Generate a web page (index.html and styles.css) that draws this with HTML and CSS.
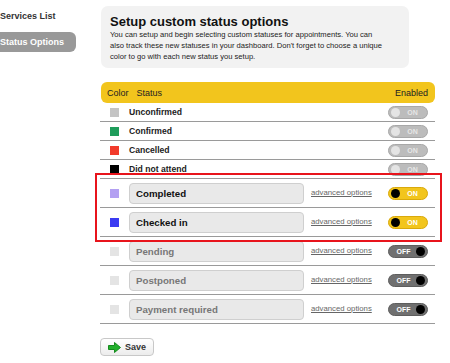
FILE: index.html
```html
<!DOCTYPE html>
<html lang="en">
<head>
    <title>Status Options</title>
    <link rel="stylesheet" href="styles.css">
</head>
<body>
    <div class="sidebar">
        <a class="nav-link" href="#">Services List</a>
        <a class="nav-link active" href="#">Status Options</a>
    </div>

    <div class="main">
        <div class="intro">
            <h1>Setup custom status options</h1>
            <p>You can setup and begin selecting custom statuses for appointments. You can<br>
            also track these new statuses in your dashboard. Don't forget to choose a unique color to go with each new status you setup.</p>
        </div>

        <div class="status-table">
            <div class="table-head">
                <span class="head-color">Color</span>
                <span>Status</span>
                <span class="head-enabled">Enabled</span>
            </div>

            <!-- built-in statuses -->
            <div class="status-row">
                <span class="swatch" style="background: #c4c4c4;"></span>
                <span class="status-name">Unconfirmed</span>
                <span class="switch locked"><span class="knob"></span><span class="switch-label">ON</span></span>
            </div>
            <div class="status-row">
                <span class="swatch" style="background: #1f9d5b;"></span>
                <span class="status-name">Confirmed</span>
                <span class="switch locked"><span class="knob"></span><span class="switch-label">ON</span></span>
            </div>
            <div class="status-row">
                <span class="swatch" style="background: #f23b2b;"></span>
                <span class="status-name">Cancelled</span>
                <span class="switch locked"><span class="knob"></span><span class="switch-label">ON</span></span>
            </div>
            <div class="status-row">
                <span class="swatch" style="background: #000;"></span>
                <span class="status-name">Did not attend</span>
                <span class="switch locked"><span class="knob"></span><span class="switch-label">ON</span></span>
            </div>

            <!-- custom statuses -->
            <div class="status-row editable">
                <span class="swatch" style="background: #b3a0f2;"></span>
                <input class="status-field" type="text" value="Completed">
                <a class="advanced" href="#">advanced options</a>
                <span class="switch on"><span class="knob"></span><span class="switch-label">ON</span></span>
            </div>
            <div class="status-row editable">
                <span class="swatch" style="background: #3b3bf2;"></span>
                <input class="status-field" type="text" value="Checked in">
                <a class="advanced" href="#">advanced options</a>
                <span class="switch on"><span class="knob"></span><span class="switch-label">ON</span></span>
            </div>
            <div class="status-row editable">
                <span class="swatch empty"></span>
                <input class="status-field off" type="text" value="Pending">
                <a class="advanced" href="#">advanced options</a>
                <span class="switch off"><span class="switch-label">OFF</span><span class="knob"></span></span>
            </div>
            <div class="status-row editable">
                <span class="swatch empty"></span>
                <input class="status-field off" type="text" value="Postponed">
                <a class="advanced" href="#">advanced options</a>
                <span class="switch off"><span class="switch-label">OFF</span><span class="knob"></span></span>
            </div>
            <div class="status-row editable">
                <span class="swatch empty"></span>
                <input class="status-field off" type="text" value="Payment required">
                <a class="advanced" href="#">advanced options</a>
                <span class="switch off"><span class="switch-label">OFF</span><span class="knob"></span></span>
            </div>

            <div class="highlight"></div>
        </div>

        <button class="save-button">
            <svg width="13" height="11" viewBox="0 0 13 11">
                <path d="M0.5 3.5h6v-3l6 5-6 5v-3h-6z" fill="#22b02c" stroke="#168a1e" stroke-width="1"/>
            </svg>
            Save
        </button>
    </div>
</body>
</html>
```

FILE: styles.css
```css
body {
    font-family: "Liberation Sans", Arial, sans-serif;
    background-color: #fff;
    margin: 0;
    padding: 0;
    display: flex;
    color: #222;
}

.sidebar {
    width: 100px;
    flex-shrink: 0;
    display: flex;
    flex-direction: column;
    align-items: flex-start;
    padding-top: 10px;
}

.nav-link {
    font-size: 9px;
    font-weight: bold;
    color: #333;
    text-decoration: none;
    line-height: 12px;
}

.nav-link.active {
    margin-top: 10px;
    margin-left: -10px;
    padding: 4px 12px 4px 10px;
    background-color: #999;
    color: #fff;
    border-radius: 0 6px 6px 0;
}

.main {
    width: 335px;
    padding-top: 6px;
}

.intro {
    width: 286px;
    margin-left: 1px;
    padding: 8px 13px 6px 9px;
    background-color: #f2f2f2;
    border-radius: 7px;
}

.intro h1 {
    margin: 0;
    font-size: 13px;
    line-height: 15px;
    color: #111;
}

.intro p {
    margin: 0;
    font-size: 7.6px;
    line-height: 11px;
    color: #222;
}

.status-table {
    position: relative;
    margin-top: 14px;
}

.table-head {
    display: flex;
    align-items: center;
    height: 21px;
    margin-left: 1px;
    padding: 0 7px 0 6px;
    background-color: #f2c51d;
    border-radius: 6px;
    font-size: 9px;
    color: #222;
}

.head-color {
    margin-right: 8px;
}

.head-enabled {
    margin-left: auto;
}

.status-row {
    display: flex;
    align-items: center;
    height: 18px;
    border-bottom: 1px solid #9a9a9a;
}

.status-row.editable {
    height: 28px;
}

.swatch {
    width: 9px;
    height: 9px;
    margin: 0 10px;
    flex-shrink: 0;
}

.swatch.empty {
    background-color: #e4e4e4;
}

.status-name {
    font-size: 8.6px;
    font-weight: bold;
    color: #222;
}

.status-field {
    box-sizing: border-box;
    width: 175px;
    height: 21px;
    margin: 0;
    padding: 0 6px;
    border: 1px solid #cfcfcf;
    border-radius: 4px;
    background-color: #e9e9e9;
    font-family: "Liberation Sans", Arial, sans-serif;
    font-size: 9.7px;
    font-weight: bold;
    color: #111;
}

.status-field.off {
    color: #777;
}

.advanced {
    margin: 0 0 2px 7px;
    font-size: 7.75px;
    color: #666;
}

.switch {
    box-sizing: border-box;
    display: flex;
    align-items: center;
    width: 40px;
    height: 13px;
    margin-left: auto;
    margin-right: 7px;
    padding: 0 2px;
    border-radius: 7px;
    font-size: 7px;
    font-weight: bold;
    color: #fff;
}

.switch .knob {
    width: 9px;
    height: 9px;
    border-radius: 50%;
}

.switch-label {
    flex: 1;
    text-align: center;
}

.switch.locked {
    background-color: #bcbcbc;
    border: 1px solid #a8a8a8;
    color: #e6e6e6;
}

.switch.locked .knob {
    background-color: #e4e4e4;
}

.switch.on {
    background-color: #f2c51d;
    border: 1px solid #d9a90c;
}

.switch.on .knob {
    background-color: #000;
}

.switch.off {
    background-color: #707070;
    border: 1px solid #5e5e5e;
}

.switch.off .knob {
    background-color: #000;
}

.highlight {
    position: absolute;
    left: -5px;
    top: 91px;
    width: 343px;
    height: 65px;
    border: 2px solid #e8141c;
}

.save-button {
    display: flex;
    align-items: center;
    gap: 4px;
    height: 18px;
    margin-top: 14px;
    padding: 0 7px;
    border: 1px solid #c8c8c8;
    border-radius: 4px;
    background: linear-gradient(#fff, #ececec);
    font-family: "Liberation Sans", Arial, sans-serif;
    font-size: 9px;
    font-weight: bold;
    color: #333;
    cursor: pointer;
}
```
